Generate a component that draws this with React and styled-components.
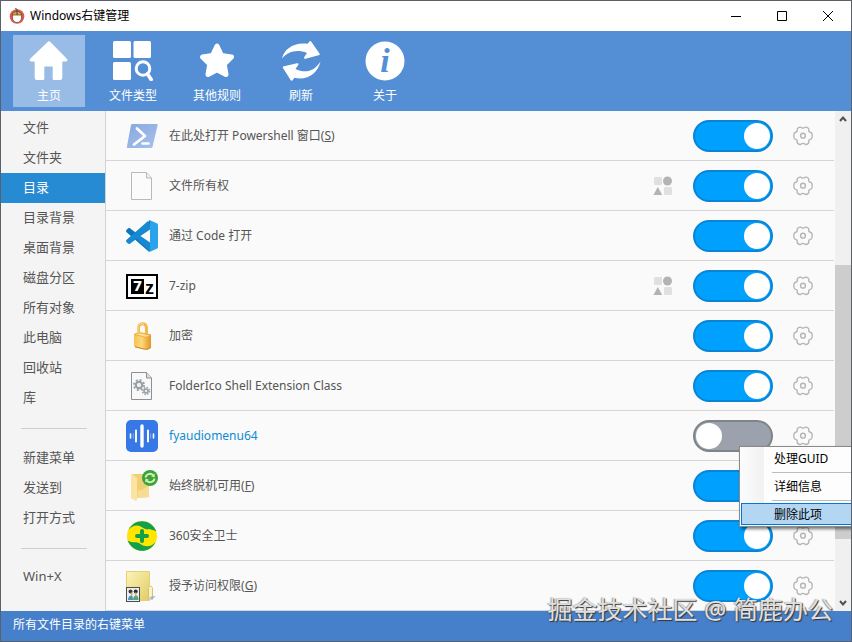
import React, { useState } from 'react'
import styled, { createGlobalStyle, css } from 'styled-components'

const toolbarItems = [
    { label: '主页', icon: 'home' },
    { label: '文件类型', icon: 'types' },
    { label: '其他规则', icon: 'star' },
    { label: '刷新', icon: 'refresh' },
    { label: '关于', icon: 'about' },
]

const sideGroups = [
    ['文件', '文件夹', '目录', '目录背景', '桌面背景', '磁盘分区', '所有对象', '此电脑', '回收站', '库'],
    ['新建菜单', '发送到', '打开方式'],
    ['Win+X'],
]

const menuItems = [
    { id: 'powershell', name: '在此处打开 Powershell 窗口', accessKey: 'S', on: true },
    { id: 'owner', name: '文件所有权', multi: true, on: true },
    { id: 'code', name: '通过 Code 打开', on: true },
    { id: 'sevenzip', name: '7-zip', multi: true, on: true },
    { id: 'lock', name: '加密', on: true },
    { id: 'dll', name: 'FolderIco Shell Extension Class', on: true },
    { id: 'audio', name: 'fyaudiomenu64', on: false, active: true },
    { id: 'offline', name: '始终脱机可用', accessKey: 'F', on: true },
    { id: 'safe360', name: '360安全卫士', on: true },
    { id: 'share', name: '授予访问权限', accessKey: 'G', on: true },
]

const toolbarIcons = {
    home: (
        <path d="M18.6 1 1.4 17.600c-1.4 1.4-.9 3 .9 3h3.400v15.800c0 1.600 1 2.600 2.600 2.600h5.400c1 0 1.600-.6 1.600-1.600V25.600h8.400v11.800c0 1 .6 1.600 1.600 1.600h5.400c1.600 0 2.600-1 2.600-2.600V20.600h3.400c1.800 0 2.300-1.600.9-3L21.400 1c-1-.9-1.900-.9-2.800 0Z" />
    ),
    types: (
        <>
            <rect x="0" y="0" width="18" height="17" rx="1.5" />
            <rect x="20.500" y="0" width="17.500" height="17" rx="1.5" />
            <rect x="0" y="21" width="18" height="18" rx="1.5" />
            <circle cx="30" cy="27.500" r="6.800" fill="none" stroke="#fff" strokeWidth="3" />
            <path d="m34.500 33 3.700 5.500" stroke="#fff" strokeWidth="3.600" strokeLinecap="round" />
        </>
    ),
    star: (
        <path
            d="m20 5 4.500 9.500 10 1.400-7.300 7.200 1.800 10.400L20 28.700l-9 4.800 1.800-10.400-7.300-7.200 10-1.400Z"
            stroke="#fff"
            strokeWidth="5"
            strokeLinejoin="round"
        />
    ),
    refresh: (
        <>
            <path d="M1 17.500C3 8 13 .8 26.500 2.700L28.500.500c.6-.8 1.500-.6 1.800.3L38.500 12.500c.4.900 0 1.700-1 1.800L24.500 17.700c-1.300.2-1.900-.8-1.200-1.700l2.700-4C16 7.800 7 10.500 1 17.500Z" />
            <path d="M39.500 20.500C37 32 26 40 13.500 36.800l-2 2.500c-.6.8-1.500.6-1.900-.3L2 27c-.4-.9 0-1.700 1-1.800l13-2.900c1.300-.2 1.900.8 1.200 1.700L14.500 28C24 32.500 33.500 30.500 39.500 20.500Z" />
        </>
    ),
    about: (
        <>
            <circle cx="20" cy="20" r="19.500" />
            <text x="20" y="31" textAnchor="middle" fontFamily="Liberation Serif, serif" fontStyle="italic" fontWeight="bold" fontSize="34" fill="#548fd6">i</text>
        </>
    ),
}

const itemIcons = {
    powershell: (
        <>
            <defs>
                <linearGradient id="ps" x1="0" y1="0" x2="1" y2="1">
                    <stop offset="0" stopColor="#86a8e0" />
                    <stop offset="1" stopColor="#a9c1ec" />
                </linearGradient>
            </defs>
            <path d="M6.200 4h24.600c.6 0 1 .5.800 1.200L26.500 27c-.2.700-.7 1-1.300 1H1.700c-.7 0-1-.5-.8-1.200L5 5c.2-.6.600-1 1.200-1Z" fill="url(#ps)" />
            <path d="m11 8.500 8 7.500-11 8.500" fill="none" stroke="#fff" strokeWidth="2.800" strokeLinecap="round" strokeLinejoin="round" />
            <path d="M16.500 23.500h6" stroke="#fff" strokeWidth="2.600" strokeLinecap="round" />
        </>
    ),
    owner: (
        <>
            <path d="M5.500 2.500h15l5 5.500v21.500h-20Z" fill="#fbfbfb" stroke="#b9b9b9" />
            <path d="M20.500 2.500V8h5" fill="#eee" stroke="#b9b9b9" />
        </>
    ),
    code: (
        <>
            <path d="M24 .3 10.500 13.300 4 8.300c-.6-.5-1.400-.4-2 .1L.6 9.800c-.7.7-.7 1.700 0 2.400l22 19.400L25 25V7Z" fill="#0a76bd" />
            <path d="M24 31.700 10.500 18.700 4 23.700c-.6.500-1.400.400-2-.1L.6 22.200c-.7-.7-.7-1.700 0-2.400L22 1l3 6v18Z" fill="#1789d1" />
            <path d="M24 9.500 14.500 16l9.500 6.500Z" fill="#fafafa" />
            <path d="m24 .2 6.700 3.100c.8.4 1.300 1.100 1.300 2v21.400c0 .9-.5 1.600-1.300 2L24 31.800c-.8.300-1.500.1-2-.4 1 .4 2-.3 2-1.400V2c0-1.100-1-1.800-2-1.400.5-.5 1.200-.7 2-.4Z" fill="#2aa3ec" />
        </>
    ),
    sevenzip: (
        <>
            <rect x="1" y="5" width="30" height="23" fill="#fff" stroke="#000" strokeWidth="2" />
            <rect x="5" y="9" width="13" height="15" fill="#000" />
            <text x="11.500" y="21" textAnchor="middle" fontFamily="DejaVu Sans, sans-serif" fontWeight="bold" fontSize="14" fill="#fff">7</text>
            <text x="23.500" y="24" textAnchor="middle" fontFamily="Liberation Sans, sans-serif" fontWeight="bold" fontSize="18" fill="#000">z</text>
        </>
    ),
    lock: (
        <>
            <defs>
                <linearGradient id="lockBody" x1="0" x2="1">
                    <stop offset="0" stopColor="#f3c255" />
                    <stop offset=".45" stopColor="#ffd878" />
                    <stop offset="1" stopColor="#dd9725" />
                </linearGradient>
            </defs>
            <path d="M12.500 14.500V8c0-5.500 7.500-6 8 0v7" fill="none" stroke="#f0b94a" strokeWidth="3" />
            <path d="M12 13V8c0-4 4-5.500 6-3.500" fill="none" stroke="#ffe399" />
            <path d="M8 14.500c2-2 4-2.500 7-2.500l10 2.500v12.500c-1 2-4 2.800-6.500 2.300L9 27c-.7-.2-1-.6-1-1.300Z" fill="url(#lockBody)" />
            <path d="M8.300 14.500c3-1.700 6-1.600 8-1.200L24.700 15.500c-3 1.700-5 1.700-7 1.300Z" fill="#ffdf8f" stroke="#d99a2f" strokeWidth=".6" />
            <path d="M9 26.800l9.500 2.400c2.500.4 5.500-.4 6.200-2" fill="none" stroke="#c8801b" />
        </>
    ),
    dll: (
        <>
            <path d="M5.500 2.500h15l5 5.500v21.500h-20Z" fill="#f8f8f8" stroke="#8d9194" />
            <path d="M20.500 2.500V8h5" fill="#ddd" stroke="#8d9194" />
            <circle cx="13" cy="15" r="5" fill="none" stroke="#9da4a9" strokeWidth="2" strokeDasharray="2 1.930" />
            <circle cx="13" cy="15" r="3.200" fill="#eceeef" stroke="#969da2" strokeWidth="2" />
            <circle cx="20" cy="21" r="3.500" fill="none" stroke="#9da4a9" strokeWidth="1.600" strokeDasharray="1.500 1.250" />
            <circle cx="20" cy="21" r="2" fill="#eceeef" stroke="#969da2" strokeWidth="1.600" />
        </>
    ),
    audio: (
        <>
            <rect width="32" height="32" rx="5" fill="#3578e6" />
            <g stroke="#fff" strokeLinecap="round">
                <path d="M4.500 14v4M27.500 14v4" strokeWidth="1.600" />
                <path d="M10 10.500v11M22 10.500v11" strokeWidth="2" />
                <path d="M16 6v20" strokeWidth="3.400" />
                <path d="M7.300 13.500v5M24.700 13.500v5" strokeWidth="1" opacity=".35" />
            </g>
        </>
    ),
    offline: (
        <>
            <path d="M6 4h13l4 3v20l-14 1Z" fill="#f1cf77" />
            <path d="M5 4h1l5 4v21.500c0 1-1 1.500-2 .9L5 28Z" fill="#fbe3a2" />
            <path d="M12 20c3 1 8-1 11-6v12c-1 1-2 1.400-3 1.400H11Z" fill="#f7dc93" />
            <circle cx="24" cy="8" r="8" fill="#3ba435" />
            <path d="M19.500 7.500c.5-3.500 5-5 7.700-2.300M28.500 8.500c-.5 3.500-5 5-7.700 2.300" fill="none" stroke="#d6efc1" strokeWidth="1.800" />
            <path d="m28.800 3.500-.3 4-3.500-1.300ZM19.200 12.500l.3-4 3.500 1.300Z" fill="#d6efc1" />
        </>
    ),
    safe360: (
        <>
            <circle cx="16" cy="16" r="15" fill="#ffe500" />
            <path d="M2.500 10C6 2 16-1.500 24 3.500c3.500 2.300 6 6.500 6.400 8C25 8 21 11 16.500 7.500 12 4 6 5 2.500 10Z" fill="#12a04b" />
            <path d="M29.500 22C26 30 16 33.500 8 28.500 4.500 26.200 2 22 1.600 20.500 7 24 10 20.500 14.500 24 19 27.500 26 27 29.500 22Z" fill="#12a04b" />
            <path d="M16 11v10M11 16h10" stroke="#12a04b" strokeWidth="4" strokeLinecap="round" />
        </>
    ),
    share: (
        <>
            <defs>
                <linearGradient id="shareFolder" x1="0" y1="0" x2="1" y2="1">
                    <stop offset="0" stopColor="#fbf3b8" />
                    <stop offset="1" stopColor="#e3cc66" />
                </linearGradient>
            </defs>
            <path d="M.5 1.500h23v29H.5Z" fill="url(#shareFolder)" stroke="#e2d17c" />
            <path d="M22.500 18.500c0-3 4-3 4 0v10.500h-4Z" fill="#f8f2cd" stroke="#d9c164" />
            <path d="m23.500 27 2.500 3 3.500-4-2 .3" fill="#9db6d8" />
            <rect x=".5" y="17.500" width="13" height="14" fill="#e9f1f4" stroke="#4d4d4d" />
            <circle cx="4.500" cy="21.500" r="2" fill="#4b3a30" />
            <circle cx="9.700" cy="21.500" r="2" fill="#332b28" />
            <path d="M5 22.500h1.500v3H5ZM9 22.500h1.500v3H9Z" fill="#dba57c" />
            <path d="M2 30c0-3 1.500-4.500 3-4.500S7 27 7 30Z" fill="#4e93b8" />
            <path d="M7 30c0-3 1.300-4.500 3-4.500S12.500 27 12.500 30Z" fill="#5ca66e" />
        </>
    ),
}

const GearIcon = () => (
    <svg width="20" height="20" viewBox="0 0 20 20" fill="none" stroke="#b5b5b5" strokeWidth="1.400" strokeLinejoin="round">
        <path d="M7.800 1.200Q10 3 12.200 1.200Q13.500.8 15.300 2.200Q16.200 3 15.700 4.300Q15.600 6 18 6.500Q19.100 7 19.200 9.700Q19.200 12.500 18 13.100Q15.600 13.600 15.700 15.300Q16.200 16.700 15.300 17.400Q13.500 18.800 12.200 18.300Q10 16.500 7.800 18.300Q6.500 18.800 4.700 17.400Q3.800 16.700 4.300 15.300Q4.400 13.600 2 13.100Q.8 12.500.8 9.700Q.9 7 2 6.500Q4.400 6 4.300 4.300Q3.800 3 4.700 2.200Q6.500.8 7.800 1.200Z" />
        <circle cx="10" cy="9.700" r="2.400" />
    </svg>
)

const MultiIcon = () => (
    <svg width="20" height="20" viewBox="0 0 20 20">
        <rect x="1" y="1" width="8" height="8" rx="1" fill="#e0e0e0" />
        <circle cx="14.500" cy="5" r="4.500" fill="#b3b3b3" />
        <path d="m4.800 11 4.400 8H.4Z" fill="#b3b3b3" />
        <rect x="11" y="11" width="8" height="8" rx="1" fill="#e0e0e0" />
    </svg>
)

const AppLogo = () => (
    <svg width="16" height="16" viewBox="0 0 16 16">
        <circle cx="8" cy="8.500" r="7.300" fill="#e0574a" />
        <path d="M8 4V1.500C8 .8 7 .6 6 .8" fill="none" stroke="#3d3b39" />
        <rect x="3.500" y="3.500" width="9" height="11" rx="4.500" fill="#fff" stroke="#6b4c3a" strokeWidth=".8" />
        <path d="M3.500 7C3.500 5 5 3.500 8 3.500S12.500 5 12.500 7Z" fill="#d9a63b" stroke="#6b4c3a" strokeWidth=".8" />
        <path d="M8 3.500V7" stroke="#57423a" />
    </svg>
)

export default function App() {
    const [page, setPage] = useState('主页')
    const [scene, setScene] = useState('目录')
    const [enabled, setEnabled] = useState(() => Object.fromEntries(menuItems.map(item => [item.id, item.on])))

    const toggle = id => setEnabled({ ...enabled, [id]: !enabled[id] })

    return (
        <>
            <GlobalStyle />
            <Window>
                <TitleBar>
                    <AppLogo />
                    <Title>Windows右键管理</Title>
                    <WindowButton aria-label="最小化">
                        <svg width="12" height="12"><path d="M1 6.500h10" /></svg>
                    </WindowButton>
                    <WindowButton aria-label="最大化">
                        <svg width="12" height="12"><path d="M1.500 1.500h9v9h-9Z" /></svg>
                    </WindowButton>
                    <WindowButton aria-label="关闭">
                        <svg width="12" height="12"><path d="m1 1 10 10M11 1 1 11" /></svg>
                    </WindowButton>
                </TitleBar>
                <Toolbar>
                    {toolbarItems.map(({ label, icon }) => (
                        <ToolButton key={label} $active={label === page} onClick={() => setPage(label)}>
                            <svg width="40" height="40" viewBox="0 0 40 40" fill="#fff">{toolbarIcons[icon]}</svg>
                            {label}
                        </ToolButton>
                    ))}
                </Toolbar>
                <Body>
                    <SideBar>
                        {sideGroups.map(group => (
                            <SideGroup key={group[0]}>
                                {group.map(name => (
                                    <SideButton key={name} $active={name === scene} onClick={() => setScene(name)}>
                                        {name}
                                    </SideButton>
                                ))}
                            </SideGroup>
                        ))}
                    </SideBar>
                    <List>
                        {menuItems.map(item => (
                            <Row key={item.id}>
                                <svg width="32" height="32" viewBox="0 0 32 32">{itemIcons[item.id]}</svg>
                                <Name htmlFor={item.id} $active={item.active}>
                                    {item.name}
                                    {item.accessKey && <>(<u>{item.accessKey}</u>)</>}
                                </Name>
                                {item.multi && <IconButton aria-label="子菜单"><MultiIcon /></IconButton>}
                                <Switch id={item.id} type="checkbox" checked={enabled[item.id]} onChange={() => toggle(item.id)} />
                                <Settings>
                                    <IconButton aria-label="设置"><GearIcon /></IconButton>
                                    {item.active && (
                                        <ContextMenu>
                                            <MenuButton>处理GUID</MenuButton>
                                            <MenuLine />
                                            <MenuButton>详细信息</MenuButton>
                                            <MenuLine />
                                            <MenuButton $hover>删除此项</MenuButton>
                                        </ContextMenu>
                                    )}
                                </Settings>
                            </Row>
                        ))}
                    </List>
                    <ScrollBar>
                        <ScrollButton aria-label="向上滚动">
                            <svg width="8" height="8"><path d="m1 6 3-3.500L7 6" /></svg>
                        </ScrollButton>
                        <Track><Thumb /></Track>
                        <ScrollButton aria-label="向下滚动">
                            <svg width="8" height="8"><path d="m1 2 3 3.500L7 2" /></svg>
                        </ScrollButton>
                    </ScrollBar>
                </Body>
                <StatusBar>所有文件目录的右键菜单</StatusBar>
                <Watermark>掘金技术社区 @ 简鹿办公</Watermark>
            </Window>
        </>
    )
}

const GlobalStyle = createGlobalStyle`
    * {
        box-sizing: border-box;
    }
    body {
        margin: 0;
        overflow-x: hidden;
        font-family: "Noto Sans", "Noto Sans CJK SC", sans-serif;
        font-size: 12px;
        color: #555;
    }
    button {
        border: 0;
        padding: 0;
        background: none;
        font: inherit;
        color: inherit;
    }
    svg {
        display: block;
        flex: none;
    }
`
const Window = styled.div`
    position: relative;
    min-height: 100vh;
    display: flex;
    flex-direction: column;
    overflow: hidden;
    border: 1px solid #5c6068;
`
const TitleBar = styled.header`
    height: 30px;
    display: flex;
    align-items: center;
    padding-left: 8px;
    background: #fff;
    color: #000;
`
const Title = styled.h1`
    flex: 1;
    margin: 0 0 2px 5px;
    font-size: 12px;
    font-weight: 400;
`
const WindowButton = styled.button`
    width: 46px;
    height: 30px;
    display: grid;
    place-items: center;
    svg {
        fill: none;
        stroke: #000;
    }
`
const Toolbar = styled.nav`
    height: 80px;
    display: flex;
    gap: 12px;
    padding: 4px 12px;
    background: #548fd6;
`
const ToolButton = styled.button`
    width: 72px;
    height: 72px;
    display: flex;
    flex-direction: column;
    align-items: center;
    gap: 6px;
    padding-top: 6px;
    line-height: 18px;
    color: #fff;
    background: ${({ $active }) => ($active ? '#98bce6' : 'transparent')};
`
const Body = styled.div`
    flex: 1;
    display: flex;
    background: #fafafa;
`
const SideBar = styled.nav`
    width: 105px;
    padding-top: 2px;
    border-right: 1px solid #d3d3d3;
    background: #f4f4f4;
`
const SideGroup = styled.div`
    & + &::before {
        content: '';
        display: block;
        height: 1px;
        margin: 15px 18px 14px 20px;
        background: #cfcfcf;
    }
`
const SideButton = styled.button`
    width: 100%;
    height: 30px;
    display: block;
    padding: 0 0 4px 22px;
    text-align: left;
    font-size: 13px;
    ${({ $active }) => $active && css`
        background: #268bd2;
        color: #fff;
    `}
`
const List = styled.main`
    flex: 1;
    margin-right: 1px;
`
const Row = styled.div`
    height: 50px;
    display: flex;
    align-items: center;
    gap: 20px;
    padding: 0 21px 0 20px;
    border-bottom: 1px solid #d6d6d6;
`
const Name = styled.label`
    flex: 1;
    margin: 0 0 1px -9px;
    color: ${({ $active }) => ($active ? '#0f8bd0' : 'inherit')};
`
const IconButton = styled.button`
    display: block;
`
const Switch = styled.input`
    appearance: none;
    width: 80px;
    height: 32px;
    flex: none;
    display: flex;
    margin: 0;
    padding: 1px;
    border: 2px solid #7f8488;
    border-radius: 16px;
    background: #9ba2ad;
    &::before {
        content: '';
        width: 26px;
        height: 26px;
        border-radius: 50%;
        background: #fff;
    }
    &:checked {
        justify-content: flex-end;
        border-color: #0a84d4;
        background: #00a0ff;
    }
`
const Settings = styled.div`
    position: relative;
`
const ContextMenu = styled.div`
    position: absolute;
    z-index: 1;
    top: 20px;
    right: -84px;
    width: 158px;
    padding: 0 1px 1px;
    border: 1px solid #8a8a8a;
    background: linear-gradient(to right, #fcfcfc, #f1f1f1 24px, #fdfdfd 24px);
    box-shadow: 2px 2px 3px #0008;
    color: #000;
`
const MenuButton = styled.button`
    width: 100%;
    height: 22px;
    display: block;
    padding-left: 33px;
    text-align: left;
    ${({ $hover }) => $hover && css`
        padding-left: 32px;
        border: 1px solid #0078d7;
        background: #b3d7f3;
    `}
`
const MenuLine = styled.div`
    height: 1px;
    margin: 3px 0 2px 31px;
    background: #bdbdbd;
`
const ScrollBar = styled.div`
    width: 16px;
    display: flex;
    flex-direction: column;
    background: #f0f0f0;
`
const ScrollButton = styled.button`
    height: 16px;
    display: grid;
    place-items: center;
    svg {
        fill: none;
        stroke: #505050;
        stroke-width: 2;
    }
`
const Track = styled.div`
    flex: 1;
    display: flex;
    flex-direction: column;
    &::before {
        content: '';
        flex: 138;
    }
    &::after {
        content: '';
        flex: 56;
    }
`
const Thumb = styled.div`
    flex: 274;
    background: #cdcdcd;
`
const StatusBar = styled.footer`
    height: 30px;
    padding-left: 12px;
    line-height: 28px;
    background: #467fca;
    color: #fff;
`
const Watermark = styled.div`
    position: absolute;
    right: 18px;
    bottom: 14px;
    line-height: 36px;
    font-size: 25px;
    color: #e0e0e0;
    text-shadow: 1px 1px 1px #333, -1px 0 1px #5558;
`
